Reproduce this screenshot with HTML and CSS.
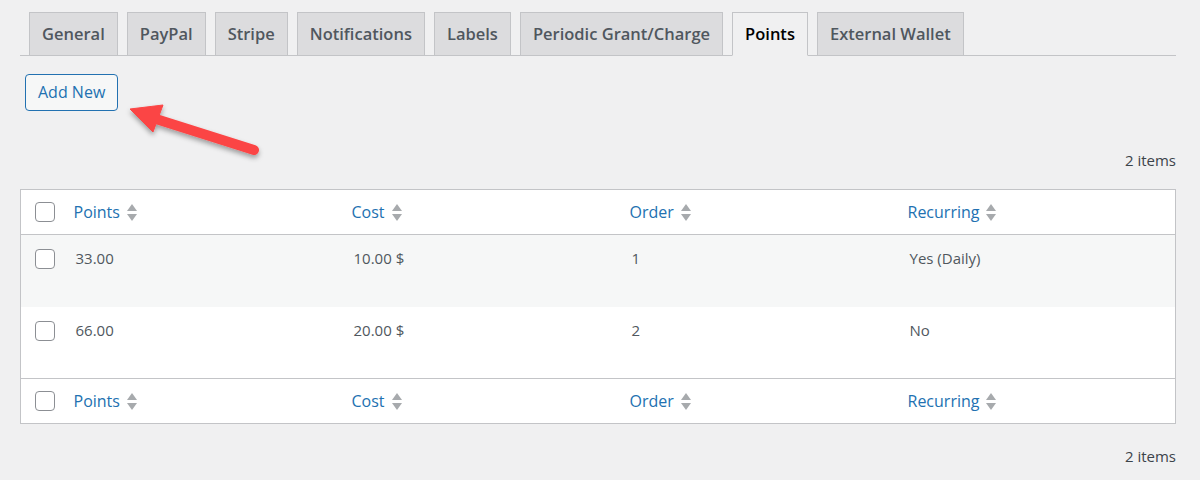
FILE: index.html
```html
<!DOCTYPE html>
<html lang="en">
<head>
<meta charset="utf-8">
<title>Points</title>
<link rel="stylesheet" href="styles.css">
</head>
<body>
<div class="wrap">
  <nav class="nav-tabs">
    <a class="nav-tab">General</a>
    <a class="nav-tab">PayPal</a>
    <a class="nav-tab">Stripe</a>
    <a class="nav-tab">Notifications</a>
    <a class="nav-tab">Labels</a>
    <a class="nav-tab">Periodic Grant/Charge</a>
    <a class="nav-tab active">Points</a>
    <a class="nav-tab">External Wallet</a>
  </nav>

  <div class="actions">
    <a class="button">Add New</a>
    <svg class="arrow" width="160" height="80" viewBox="0 0 160 80">
      <defs>
        <filter id="sh" x="-20%" y="-20%" width="140%" height="160%">
          <feDropShadow dx="0" dy="3" stdDeviation="2.5" flood-color="#000" flood-opacity="0.35"/>
        </filter>
      </defs>
      <g filter="url(#sh)" fill="#fb4545" stroke="#fb4545">
        <line x1="36" y1="25" x2="134" y2="56" stroke-width="10" stroke-linecap="round"/>
        <polygon points="10,15 43,11 33,38" stroke-width="1" stroke-linejoin="round"/>
      </g>
    </svg>
  </div>

  <div class="tablenav"><span class="num">2 items</span></div>

  <table class="list">
    <colgroup>
      <col class="c-check">
      <col><col><col><col>
    </colgroup>
    <thead>
      <tr>
        <th class="check"><span class="cb"></span></th>
        <th><a class="sort">Points <span class="ind"><i class="up"></i><i class="down"></i></span></a></th>
        <th><a class="sort">Cost <span class="ind"><i class="up"></i><i class="down"></i></span></a></th>
        <th><a class="sort">Order <span class="ind"><i class="up"></i><i class="down"></i></span></a></th>
        <th><a class="sort">Recurring <span class="ind"><i class="up"></i><i class="down"></i></span></a></th>
      </tr>
    </thead>
    <tbody>
      <tr class="alt">
        <td class="check"><span class="cb"></span></td>
        <td>33.00</td>
        <td>10.00 $</td>
        <td>1</td>
        <td>Yes (Daily)</td>
      </tr>
      <tr>
        <td class="check"><span class="cb"></span></td>
        <td>66.00</td>
        <td>20.00 $</td>
        <td>2</td>
        <td>No</td>
      </tr>
    </tbody>
    <tfoot>
      <tr>
        <th class="check"><span class="cb"></span></th>
        <th><a class="sort">Points <span class="ind"><i class="up"></i><i class="down"></i></span></a></th>
        <th><a class="sort">Cost <span class="ind"><i class="up"></i><i class="down"></i></span></a></th>
        <th><a class="sort">Order <span class="ind"><i class="up"></i><i class="down"></i></span></a></th>
        <th><a class="sort">Recurring <span class="ind"><i class="up"></i><i class="down"></i></span></a></th>
      </tr>
    </tfoot>
  </table>

  <div class="tablenav bottom"><span class="num">2 items</span></div>
</div>
</body>
</html>
```

FILE: styles.css
```css
* { box-sizing: border-box; }

html, body {
  margin: 0;
  padding: 0;
  background: #f0f0f1;
  color: #3c434a;
  font-family: "Open Sans", "Noto Sans", sans-serif;
}

.wrap {
  padding: 12px 24px 0 20px;
}

.nav-tabs {
  display: flex;
  gap: 9px;
  padding-left: 9px;
  border-bottom: 1px solid #c3c4c7;
}

.nav-tab {
  display: block;
  margin-bottom: -1px;
  padding: 6px 12px;
  line-height: 30px;
  font-size: 16.5px;
  font-weight: 600;
  color: #50575e;
  background: #dcdcde;
  border: 1px solid #c3c4c7;
  white-space: nowrap;
}

.nav-tab.active {
  background: #f0f0f1;
  color: #000;
  border-bottom-color: #f0f0f1;
}

.actions {
  position: relative;
  margin-top: 18px;
  height: 37px;
}

.button {
  display: inline-block;
  height: 37px;
  margin-left: 5px;
  padding: 0 12px;
  line-height: 35px;
  font-size: 16px;
  color: #2271b1;
  background: #f6f7f7;
  border: 1px solid #2271b1;
  border-radius: 4px;
}

.arrow {
  position: absolute;
  left: 100px;
  top: 20px;
}

.tablenav {
  display: flex;
  justify-content: flex-end;
  align-items: center;
  margin-top: 30px;
  height: 38px;
}

.num {
  font-size: 15px;
  color: #3c434a;
}

.list {
  width: 100%;
  margin-top: 10px;
  table-layout: fixed;
  border-collapse: collapse;
  border: 1px solid #c3c4c7;
  background: #fff;
}

.c-check { width: 43px; }

.list th {
  height: 45px;
  padding: 0 10px;
  text-align: left;
  font-weight: 400;
  font-size: 16px;
  vertical-align: middle;
}

.list thead th { border-bottom: 1px solid #c3c4c7; }
.list tfoot th { border-top: 1px solid #c3c4c7; }

.list td {
  height: 72px;
  padding: 11px 12px 0;
  line-height: 24px;
  font-size: 15px;
  color: #50575e;
  vertical-align: top;
}

.list tr.alt td { background: #f6f7f7; }

.list .check { padding: 0 0 0 14px; }
.list td.check { padding-top: 14px; }

.cb {
  display: block;
  width: 20px;
  height: 20px;
  border: 1px solid #8c8f94;
  border-radius: 4px;
  background: #fff;
}

.sort {
  display: inline-flex;
  align-items: center;
  gap: 7px;
  color: #2271b1;
}

.ind {
  display: inline-flex;
  flex-direction: column;
  gap: 3px;
}

.ind i {
  display: block;
  width: 0;
  height: 0;
  border-left: 5px solid transparent;
  border-right: 5px solid transparent;
}

.ind .up { border-bottom: 7px solid #a7aaad; }
.ind .down { border-top: 7px solid #a7aaad; }

.tablenav.bottom {
  margin-top: 13px;
  height: 38px;
}
```
